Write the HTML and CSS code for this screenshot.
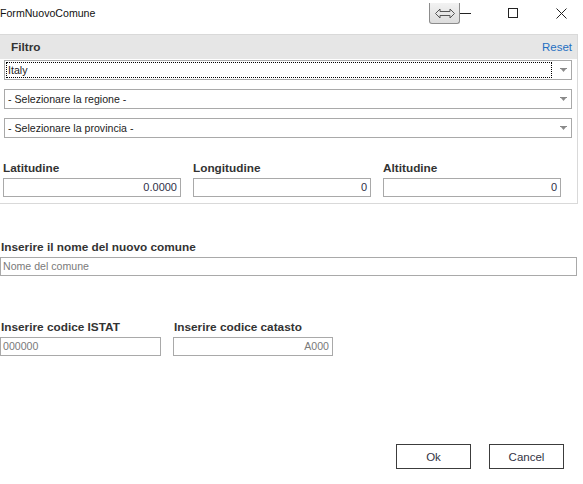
FILE: index.html
```html
<!DOCTYPE html>
<html lang="it">
<head>
<meta charset="utf-8">
<title>FormNuovoComune</title>
<link rel="stylesheet" href="styles.css">
</head>
<body>
<div class="window">
  <div class="titlebar">
    <span class="title">FormNuovoComune</span>
    <div class="controls">
      <span class="ctl"><svg width="11" height="11" viewBox="0 0 11 11"><line x1="0" y1="5.5" x2="11" y2="5.5" stroke="#222" stroke-width="1"/></svg></span>
      <span class="ctl"><svg width="11" height="11" viewBox="0 0 11 11"><rect x="0.5" y="0.5" width="9" height="9" fill="none" stroke="#222" stroke-width="1"/></svg></span>
      <span class="ctl"><svg width="11" height="11" viewBox="0 0 11 11"><path d="M0.5 0.5 L10.5 10.5 M10.5 0.5 L0.5 10.5" stroke="#222" stroke-width="1"/></svg></span>
    </div>
    <div class="dock-btn">
      <svg width="20" height="11" viewBox="0 0 20 11"><polygon points="0.5,5.5 5,1 5,3.5 15,3.5 15,1 19.5,5.5 15,10 15,7.5 5,7.5 5,10" fill="none" stroke="#555" stroke-width="1"/></svg>
    </div>
  </div>

  <div class="filter">
    <div class="filter-head">
      <span class="filter-title">Filtro</span>
      <span class="reset">Reset</span>
    </div>
    <div class="combos">
      <div class="combo">
        <span class="combo-text focused">Italy</span>
        <span class="arrow"><svg width="7" height="4" viewBox="0 0 7 4"><rect x="0" y="0" width="7" height="1" fill="#8a8a8a"/><polygon points="1,1 6,1 3.5,4" fill="#8a8a8a"/></svg></span>
      </div>
      <div class="combo">
        <span class="combo-text">- Selezionare la regione -</span>
        <span class="arrow"><svg width="7" height="4" viewBox="0 0 7 4"><rect x="0" y="0" width="7" height="1" fill="#8a8a8a"/><polygon points="1,1 6,1 3.5,4" fill="#8a8a8a"/></svg></span>
      </div>
      <div class="combo">
        <span class="combo-text">- Selezionare la provincia -</span>
        <span class="arrow"><svg width="7" height="4" viewBox="0 0 7 4"><rect x="0" y="0" width="7" height="1" fill="#8a8a8a"/><polygon points="1,1 6,1 3.5,4" fill="#8a8a8a"/></svg></span>
      </div>
    </div>
    <div class="coords">
      <div class="field">
        <div class="label">Latitudine</div>
        <div class="input num">0.0000</div>
      </div>
      <div class="field">
        <div class="label">Longitudine</div>
        <div class="input num">0</div>
      </div>
      <div class="field">
        <div class="label">Altitudine</div>
        <div class="input num">0</div>
      </div>
    </div>
  </div>

  <div class="name-section">
    <div class="label">Inserire il nome del nuovo comune</div>
    <div class="input placeholder">Nome del comune</div>
  </div>

  <div class="codes">
    <div class="code-field">
      <div class="label">Inserire codice ISTAT</div>
      <div class="input placeholder">000000</div>
    </div>
    <div class="code-field">
      <div class="label">Inserire codice catasto</div>
      <div class="input placeholder right">A000</div>
    </div>
  </div>

  <div class="buttons">
    <div class="btn">Ok</div>
    <div class="btn">Cancel</div>
  </div>
</div>
</body>
</html>
```

FILE: styles.css
```css
* { box-sizing: border-box; }

html, body {
  margin: 0;
  padding: 0;
  background: #ffffff;
}

body {
  font-family: "Liberation Sans", Arial, sans-serif;
  font-size: 10.6px;
  color: #333333;
  width: 583px;
  height: 484px;
  overflow: hidden;
}

.window {
  display: flex;
  flex-direction: column;
  width: 583px;
}

/* Title bar */
.titlebar {
  position: relative;
  height: 34px;
  display: flex;
  justify-content: space-between;
  align-items: flex-start;
}

.title {
  font-size: 10.6px;
  line-height: 14px;
  padding-top: 6px;
  color: #111111;
}

.controls {
  display: flex;
  gap: 37px;
  padding-top: 8px;
  padding-right: 16px;
}

.ctl {
  width: 11px;
  height: 11px;
  display: flex;
}

.ctl:first-child svg { margin-top: -0.5px; }

.dock-btn {
  position: absolute;
  left: 429px;
  top: 3px;
  width: 31px;
  height: 21px;
  border: 1px solid #8c8c8c;
  border-top: none;
  border-radius: 0 0 3px 3px;
  background: linear-gradient(#f2f2f2, #dcdcdc);
  display: flex;
  align-items: center;
  justify-content: center;
}

/* Filter panel */
.filter {
  width: 578px;
  border-top: 1px solid #d9d9d9;
  border-right: 1px solid #d9d9d9;
  border-bottom: 1px solid #d9d9d9;
  padding-bottom: 6px;
}

.filter-head {
  height: 24px;
  background: #e6e6e6;
  display: flex;
  align-items: center;
  justify-content: space-between;
  padding: 0 5px 0 11px;
}

.filter-title {
  font-weight: bold;
  font-size: 11.8px;
  color: #333333;
}

.reset {
  color: #1f6fc2;
  font-size: 11.5px;
}

.combos {
  display: flex;
  flex-direction: column;
  gap: 9px;
  padding: 1px 0 0 4px;
}

.combo {
  width: 568px;
  height: 20px;
  border: 1px solid #a9a9a9;
  display: flex;
  align-items: center;
  justify-content: space-between;
  padding: 0 4px 0 1px;
  color: #222222;
}

.combo-text {
  flex: 1;
  height: 16px;
  line-height: 14px;
  padding-left: 1px;
  border: 1px dotted transparent;
  margin-right: 8px;
}

.combo-text.focused {
  border-color: #000000;
}

.arrow {
  width: 7px;
  height: 4px;
  display: flex;
}

.coords {
  display: flex;
  gap: 12px;
  padding: 23px 0 0 3px;
}

.field {
  display: flex;
  flex-direction: column;
  gap: 3px;
  width: 178px;
}

.label {
  font-weight: bold;
  font-size: 11.8px;
  line-height: 14px;
  color: #333333;
}

.input {
  height: 19px;
  border: 1px solid #a9a9a9;
  line-height: 17px;
  padding: 0 3px 0 2px;
  color: #303048;
  white-space: nowrap;
}

.input.num {
  text-align: right;
  font-size: 11px;
}

.input.placeholder {
  color: #7a7a7a;
}

.input.right {
  text-align: right;
}

/* Name section */
.name-section {
  display: flex;
  flex-direction: column;
  gap: 3px;
  margin-top: 36px;
  width: 577px;
  padding-left: 1px;
}

.name-section .input {
  margin-left: -1px;
}

/* Codes */
.codes {
  display: flex;
  gap: 12px;
  margin-top: 44px;
}

.code-field {
  display: flex;
  flex-direction: column;
  gap: 3px;
  width: 161px;
}

.code-field .label {
  padding-left: 1px;
}

.code-field:last-child {
  width: 160px;
}

/* Buttons */
.buttons {
  display: flex;
  justify-content: flex-end;
  gap: 18px;
  margin-top: 88px;
  padding-right: 19px;
}

.btn {
  width: 75px;
  height: 25px;
  border: 1px solid #3c3c3c;
  display: flex;
  align-items: center;
  justify-content: center;
  color: #333344;
  font-size: 11.5px;
}
```
